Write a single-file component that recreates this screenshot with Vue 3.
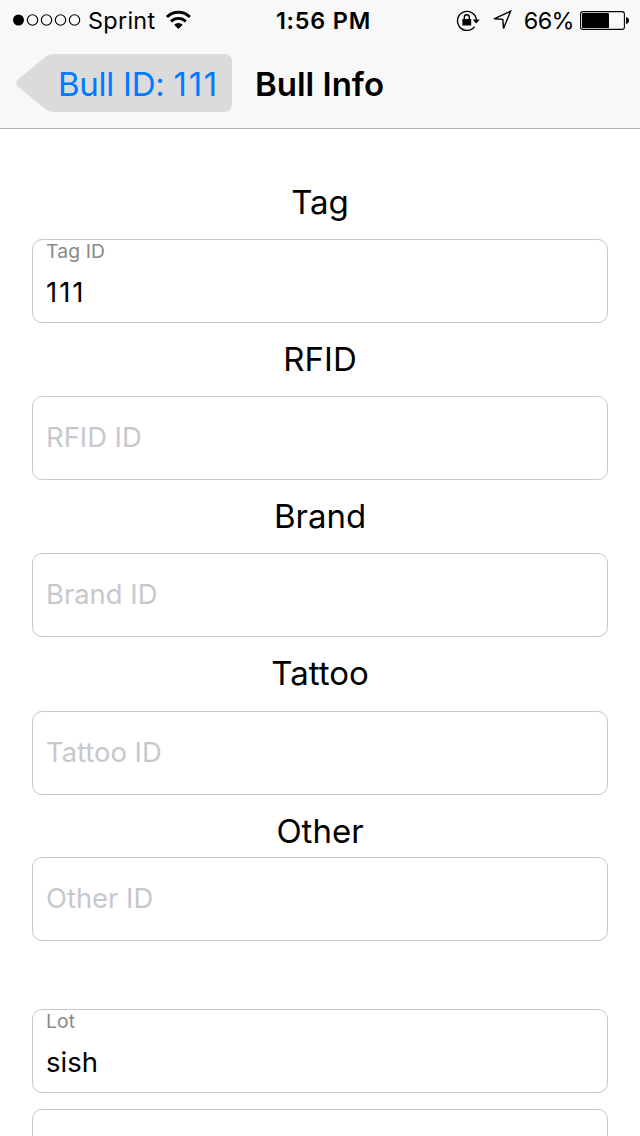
<script setup>
const identifiers = [
  { key: 'tag', title: 'Tag', label: 'Tag ID', value: '111' },
  { key: 'rfid', title: 'RFID', label: 'RFID ID', value: '' },
  { key: 'brand', title: 'Brand', label: 'Brand ID', value: '' },
  { key: 'tattoo', title: 'Tattoo', label: 'Tattoo ID', value: '' },
  { key: 'other', title: 'Other', label: 'Other ID', value: '' },
]
</script>

<template>
  <div class="screen">
    <header class="bar">
      <div class="status">
        <div class="status-left">
          <svg class="signal" width="70" height="14" viewBox="0 0 70 14">
            <circle cx="6.5" cy="7" r="5.5" fill="#000" />
            <g fill="none" stroke="#000" stroke-width="1.1">
              <circle cx="20.5" cy="7" r="5.2" />
              <circle cx="34.5" cy="7" r="5.2" />
              <circle cx="48.5" cy="7" r="5.2" />
              <circle cx="62.5" cy="7" r="5.2" />
            </g>
          </svg>
          <span class="carrier">Sprint</span>
          <svg class="wifi" width="26" height="20" viewBox="0 0 26 20">
            <g fill="none" stroke="#000" stroke-width="2.9">
              <path d="M1.9 7.1 A16 16 0 0 1 24.9 7.1" />
              <path d="M6 11.4 A10.6 10.6 0 0 1 20.8 11.4" />
            </g>
            <path d="M9.1 14.7 A6 6 0 0 1 17.7 14.7 L13.4 19 Z" fill="#000" />
          </svg>
        </div>
        <span class="clock">1:56 PM</span>
        <div class="status-right">
          <svg class="lock" width="24" height="22" viewBox="0 0 24 22">
            <path d="M18.6 16.6 A9.5 9.5 0 1 1 20.4 9.6" fill="none" stroke="#000" stroke-width="1.4" />
            <path d="M16.6 9.4 H23.8 L20.2 13.6 Z" fill="#000" />
            <rect x="6.4" y="9" width="8.8" height="6.6" rx=".4" fill="#000" />
            <path d="M8.3 9.4 V7.2 A2.5 2.5 0 0 1 13.3 7.2 V9.4" fill="none" stroke="#000" stroke-width="1.4" />
          </svg>
          <svg class="location" width="20" height="20" viewBox="0 0 20 20">
            <path d="M18.6 1.2 L2 8.8 L10.8 9.4 L11.5 18.4 Z" fill="none" stroke="#000" stroke-width="1.4" stroke-linejoin="miter" />
          </svg>
          <span class="percent">66%</span>
          <svg class="battery" width="50" height="20" viewBox="0 0 50 20">
            <rect x=".6" y=".6" width="43.8" height="17.8" rx="2.4" fill="none" stroke="#000" stroke-width="1.1" />
            <rect x="2" y="2" width="27" height="15" rx=".8" fill="#000" />
            <path d="M46 6 Q49 6.6 49 9.5 Q49 12.4 46 13 Z" fill="#000" />
          </svg>
        </div>
      </div>
      <div class="nav">
        <button class="back" type="button">
          <svg class="back-shape" width="216" height="58" viewBox="0 0 216 58">
            <path d="M37 0 H208 Q216 0 216 8 V50 Q216 58 208 58 H37 Q33 58 29.5 55.2 L2 32.6 Q-1.6 29 2 25.4 L29.5 2.8 Q33 0 37 0 Z" fill="#dbdbdb" />
          </svg>
          <span class="back-label">Bull ID: <span class="back-number">111</span></span>
        </button>
        <h1 class="title">Bull Info</h1>
      </div>
    </header>

    <main class="form">
      <section v-for="item in identifiers" :key="item.key" class="group" :class="item.key">
        <h2 class="heading">{{ item.title }}</h2>
        <div class="field">
          <template v-if="item.value">
            <span class="label">{{ item.label }}</span>
            <span class="value digits">{{ item.value }}</span>
          </template>
          <span v-else class="placeholder">{{ item.label }}</span>
        </div>
      </section>
      <div class="field lot">
        <span class="label">Lot</span>
        <span class="value">sish</span>
      </div>
      <div class="field next"></div>
    </main>
  </div>
</template>

<style>
html,
body {
  margin: 0;
  overflow: hidden;
  background: #fff;
}
</style>

<style scoped>
.screen {
  width: 640px;
  height: 1136px;
  overflow: hidden;
  background: #fff;
  color: #000;
  font-family: Inter, "Liberation Sans", sans-serif;
  white-space: nowrap;
}
.bar {
  box-sizing: border-box;
  height: 129px;
  background: #f8f8f8;
  border-bottom: 1px solid #b2b2b2;
}
.status {
  height: 40px;
  display: grid;
  grid-template-columns: 1fr auto 1fr;
  align-items: center;
  font-size: 23.4px;
  line-height: 40px;
}
.status-left,
.status-right {
  display: flex;
  align-items: center;
}
.status-left {
  padding-left: 12px;
}
.carrier,
.clock,
.percent {
  padding-top: 2px;
  line-height: 38px;
}
.carrier {
  margin-left: 6px;
  letter-spacing: 0.3px;
}
.wifi {
  margin-left: 10px;
}
.clock {
  font-weight: 600;
  padding-left: 7px;
  letter-spacing: 0.8px;
}
.status-right {
  justify-content: flex-end;
  padding-right: 10px;
}
.lock {
  margin-top: 1px;
}
.location {
  margin-left: 12px;
}
.percent {
  margin-left: 12px;
  letter-spacing: -0.6px;
}
.battery {
  margin: 1px 0 0 6px;
}
.nav {
  display: flex;
  align-items: center;
  height: 58px;
  padding: 14px 0 0 16px;
}
.back {
  position: relative;
  width: 216px;
  height: 58px;
  padding: 0 0 0 42px;
  border: 0;
  background: none;
  font: inherit;
  text-align: left;
  color: #007aff;
}
.back-shape {
  position: absolute;
  left: 0;
  top: 0;
}
.back-label {
  position: relative;
  display: block;
  font-size: 33px;
  line-height: 60px;
  letter-spacing: -0.25px;
}
.back-number {
  letter-spacing: 1.7px;
}
.title {
  margin: 2px 0 0 23px;
  font-size: 33px;
  font-weight: 600;
  line-height: 60px;
}
.form {
  padding: 53px 32px 0;
}
.heading {
  margin: 0 0 17px;
  height: 40px;
  font-size: 33px;
  font-weight: 400;
  line-height: 40px;
  text-align: center;
}
.group {
  margin-bottom: 16px;
}
.tattoo .heading {
  margin-bottom: 18px;
}
.other .heading {
  margin-bottom: 6px;
}
.field {
  box-sizing: border-box;
  height: 84px;
  padding-left: 13px;
  border: 1px solid #c8c8c8;
  border-radius: 10px;
}
.field span {
  display: block;
}
.placeholder {
  padding-top: 23px;
  font-size: 27.4px;
  line-height: 34px;
  color: #c7c7cd;
}
.label {
  height: 24px;
  font-size: 19.3px;
  line-height: 22px;
  letter-spacing: 0.15px;
  color: #898989;
}
.value {
  padding-top: 11px;
  font-size: 27.5px;
  line-height: 34px;
}
.digits {
  letter-spacing: 2px;
}
.lot {
  margin-top: 68px;
}
.next {
  margin-top: 16px;
}
</style>
